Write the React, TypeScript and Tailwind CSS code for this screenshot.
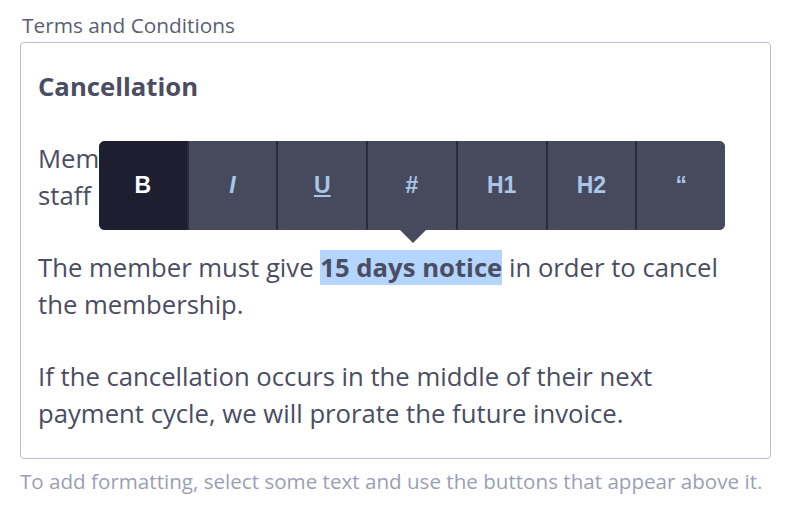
import React from "react";

const tools = ["B", "I", "U", "#", "H1", "H2", "“"];

function Toolbar() {
  return (
    <div className="absolute left-[78px] top-[98px] z-10">
      <div className="grid grid-cols-7 w-[626px] h-[89px] rounded-[6px] overflow-hidden bg-[#2a2c3e] gap-[2px]">
        {tools.map((t, i) => (
          <button
            key={t}
            className={
              "flex items-center justify-center font-['Liberation_Sans',Arial,sans-serif] font-bold text-[23px] " +
              (i === 0 ? "bg-[#1d1f31] text-white" : "bg-[#474a5d] text-[#a9c6e8]")
            }
          >
            {t === "I" ? <span className="italic">I</span> : t === "U" ? <span className="underline underline-offset-2">U</span> : t}
          </button>
        ))}
      </div>
      <div className="ml-[301px] w-0 h-0 border-l-[13px] border-r-[13px] border-t-[13px] border-l-transparent border-r-transparent border-t-[#474a5d]" />
    </div>
  );
}

export default function App() {
  return (
    <div className="w-[800px] h-[524px] bg-white font-['Open_Sans',sans-serif] text-[#4b4d62] pt-[11px]">
      <div className="ml-[22px] text-[20.8px] leading-[28px] text-[#5b5e73]">Terms and Conditions</div>
      <div className="relative ml-[20px] mt-[3px] w-[751px] border-[1.5px] border-[#b9bdd4] rounded-[4px] pl-[17px] pr-[16px] pt-[25px] pb-[26px]">
        <h2 className="text-[25.7px] leading-[37px] font-bold">Cancellation</h2>
        <Toolbar />
        <p className="mt-[35px] text-[25.7px] leading-[37px]">
          Members may cancel at any time by notifying our
          <br />
          staff in writing or by email.
        </p>
        <p className="mt-[35px] text-[25.7px] leading-[37px]">
          The member must give <span className="font-bold bg-[#b4d5fd]">15 days notice</span> in order to cancel the membership.
        </p>
        <p className="mt-[35px] text-[25.7px] leading-[37px]">
          If the cancellation occurs in the middle of their next payment cycle, we will prorate the future invoice.
        </p>
      </div>
      <div className="ml-[20px] mt-[8px] text-[20.6px] leading-[28px] text-[#9b9eb6]">
        To add formatting, select some text and use the buttons that appear above it.
      </div>
    </div>
  );
}
